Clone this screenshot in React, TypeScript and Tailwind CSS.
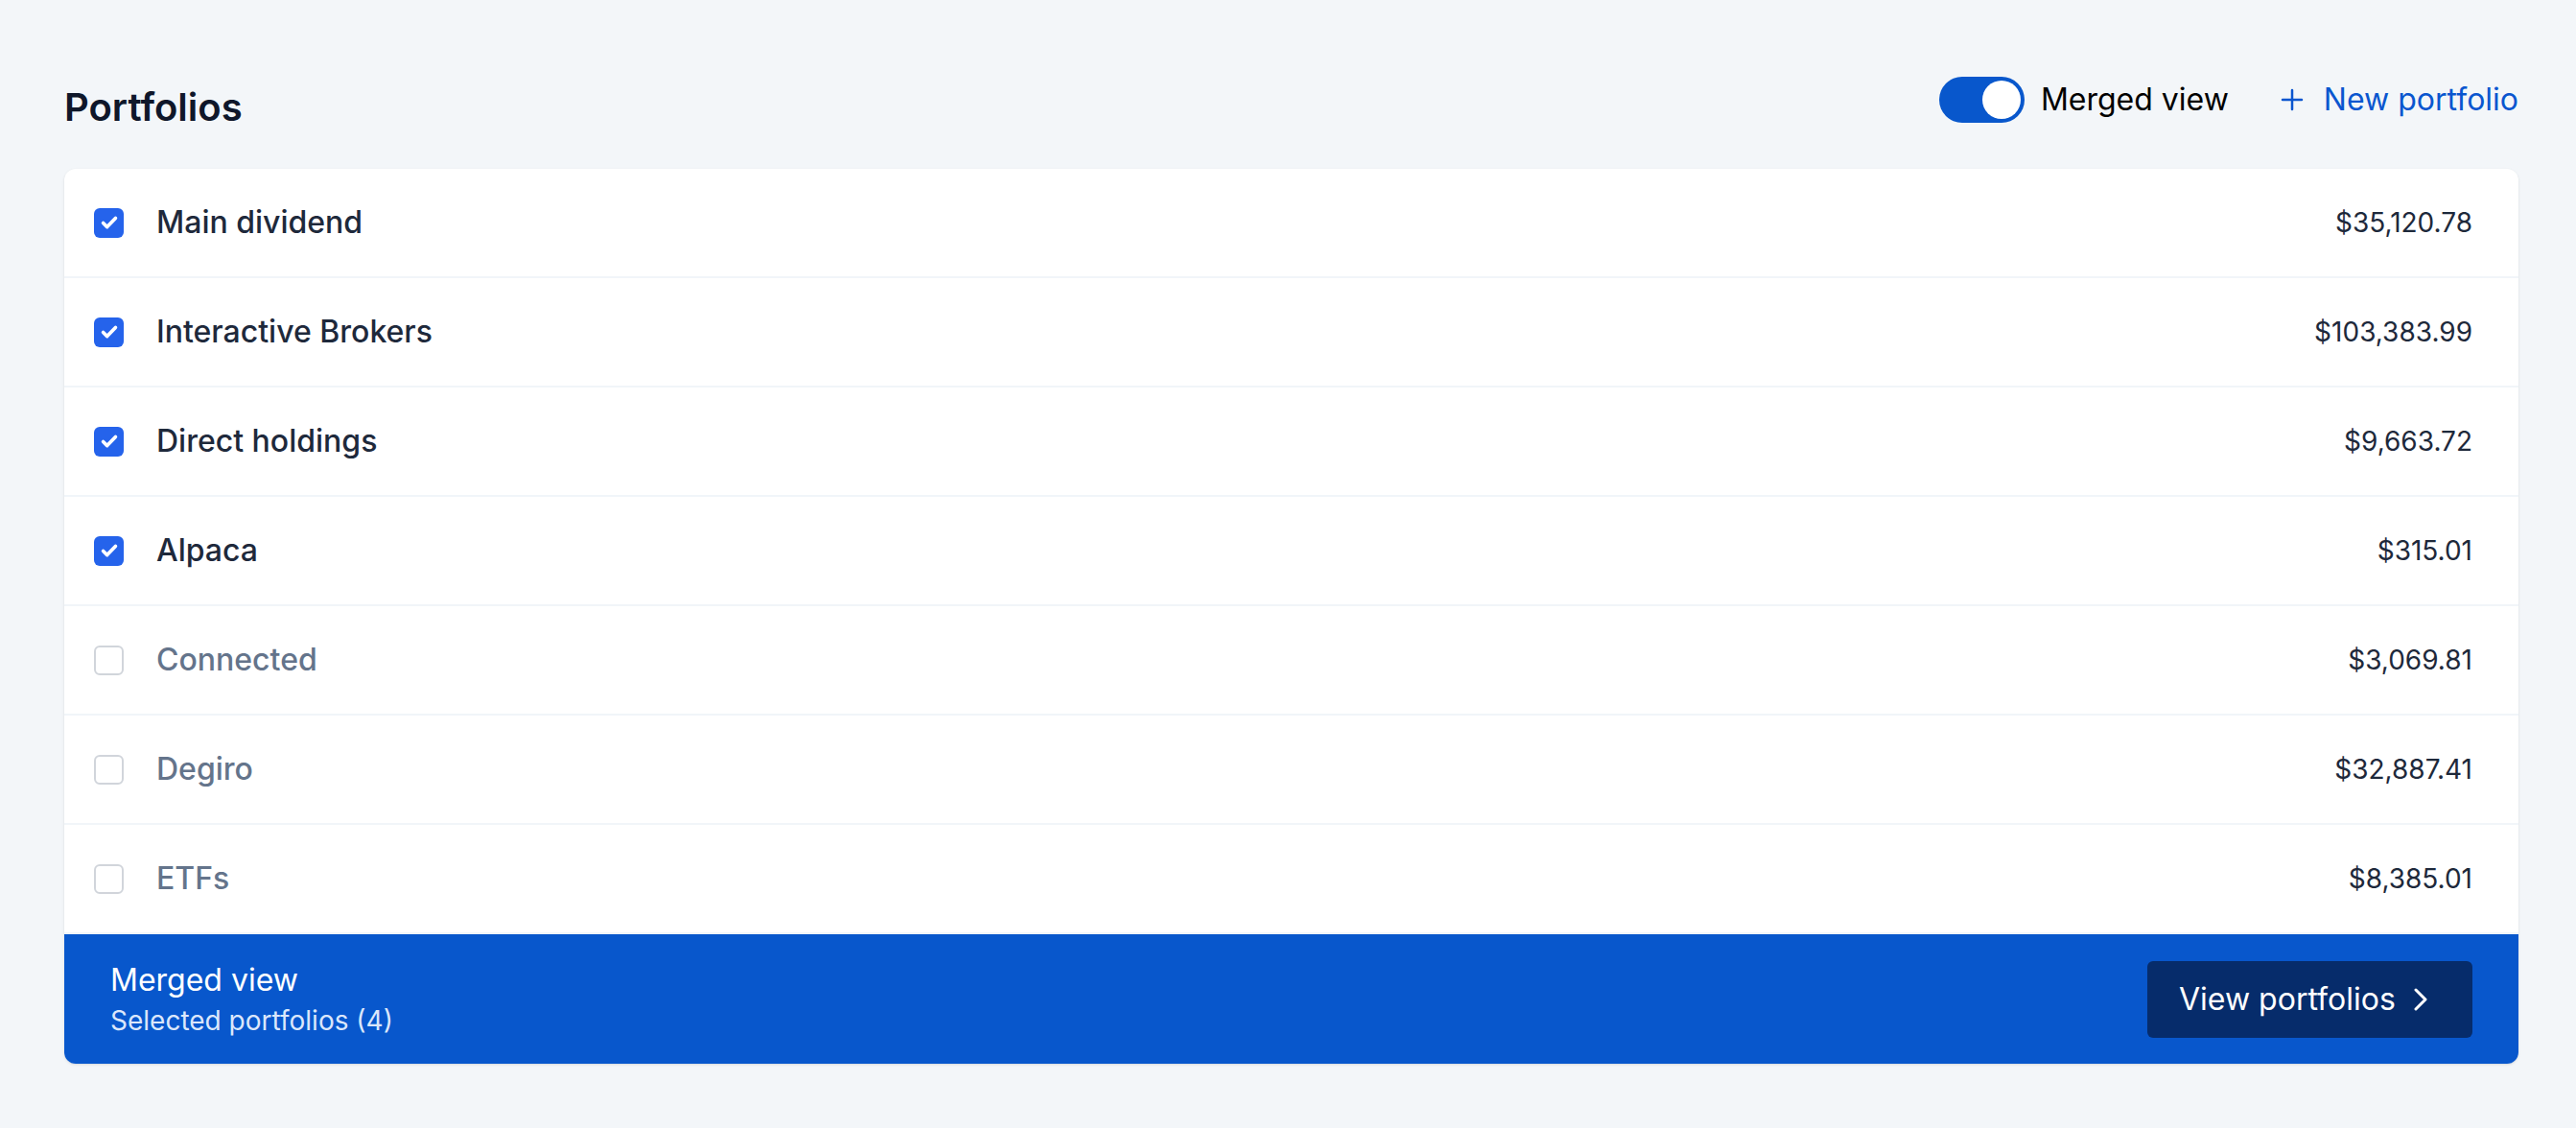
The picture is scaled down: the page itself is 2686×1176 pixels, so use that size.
import React from 'react'

interface Portfolio {
  id: number
  name: string
  amount: string
  selected: boolean
}

const portfolios: Portfolio[] = [
  { id: 1, name: 'Main dividend', amount: '$35,120.78', selected: true },
  { id: 2, name: 'Interactive Brokers', amount: '$103,383.99', selected: true },
  { id: 3, name: 'Direct holdings', amount: '$9,663.72', selected: true },
  { id: 4, name: 'Alpaca', amount: '$315.01', selected: true },
  { id: 5, name: 'Connected', amount: '$3,069.81', selected: false },
  { id: 6, name: 'Degiro', amount: '$32,887.41', selected: false },
  { id: 7, name: 'ETFs', amount: '$8,385.01', selected: false }
]

function Checkbox({ checked }: { checked: boolean }) {
  if (checked) {
    return (
      <div className="w-[31px] h-[31px] rounded-[6px] bg-[#2563eb] flex items-center justify-center shrink-0">
        <svg width="22" height="22" viewBox="0 0 24 24" fill="none">
          <path d="M5 12.5l4.5 4.5L19 7" stroke="white" strokeWidth="4" strokeLinecap="round" strokeLinejoin="round" />
        </svg>
      </div>
    )
  }
  return <div className="w-[31px] h-[31px] rounded-[6px] border-2 border-[#d1d5db] bg-white shrink-0" />
}

export default function App() {
  const selectedCount = portfolios.filter((p) => p.selected).length

  return (
    <div className="min-h-screen bg-[#f3f6f9] font-['Inter',sans-serif] pl-[67px] pr-[60px] pt-[80px]">
      {/* Header */}
      <div className="flex items-start justify-between">
        <h1 className="mt-[5px] text-[40px] leading-[54px] font-semibold text-[#0f172a]">Portfolios</h1>
        <div className="flex items-center h-[48px]">
          <div className="w-[89px] h-[48px] rounded-full bg-[#0857cc] flex items-center justify-end pr-[4px]">
            <div className="w-[40px] h-[40px] rounded-full bg-white" />
          </div>
          <span className="ml-[17px] text-[32px] text-black">Merged view</span>
          <button className="ml-[54px] flex items-center text-[#0a56cf]">
            <svg width="24" height="24" viewBox="0 0 24 24" fill="none">
              <path d="M12 2v20M2 12h20" stroke="currentColor" strokeWidth="2.5" strokeLinecap="round" />
            </svg>
            <span className="ml-[21px] text-[32px]">New portfolio</span>
          </button>
        </div>
      </div>

      {/* Card */}
      <div className="mt-[37px] bg-white rounded-[12px] shadow-sm overflow-hidden">
        {portfolios.map((p) => (
          <div key={p.id} className="h-[114px] border-b-2 border-[#f1f5f9] flex items-center pl-[31px] pr-[48px]">
            <Checkbox checked={p.selected} />
            <span
              className={`ml-[34px] text-[32px] font-[450] ${
                p.selected ? 'text-[#1e293b]' : 'text-[#64748b]'
              }`}
            >
              {p.name}
            </span>
            <span className="ml-auto text-[28px] text-[#1e293b]">{p.amount}</span>
          </div>
        ))}

        {/* Footer */}
        <div className="h-[135px] bg-[#0857cc] flex items-center justify-between px-[48px]">
          <div>
            <p className="text-[32px] leading-[40px] text-white">Merged view</p>
            <p className="mt-[5px] text-[28px] leading-[34px] text-[#dbe7fb]">Selected portfolios ({selectedCount})</p>
          </div>
          <button className="h-[80px] w-[339px] rounded-[6px] bg-[#062c6b] flex items-center pl-[33px] text-white">
            <span className="text-[32px]">View portfolios</span>
            <svg className="ml-[18px]" width="16" height="24" viewBox="0 0 16 24" fill="none">
              <path d="M3 2l10 10-10 10" stroke="white" strokeWidth="3" strokeLinecap="round" strokeLinejoin="round" />
            </svg>
          </button>
        </div>
      </div>
    </div>
  )
}
